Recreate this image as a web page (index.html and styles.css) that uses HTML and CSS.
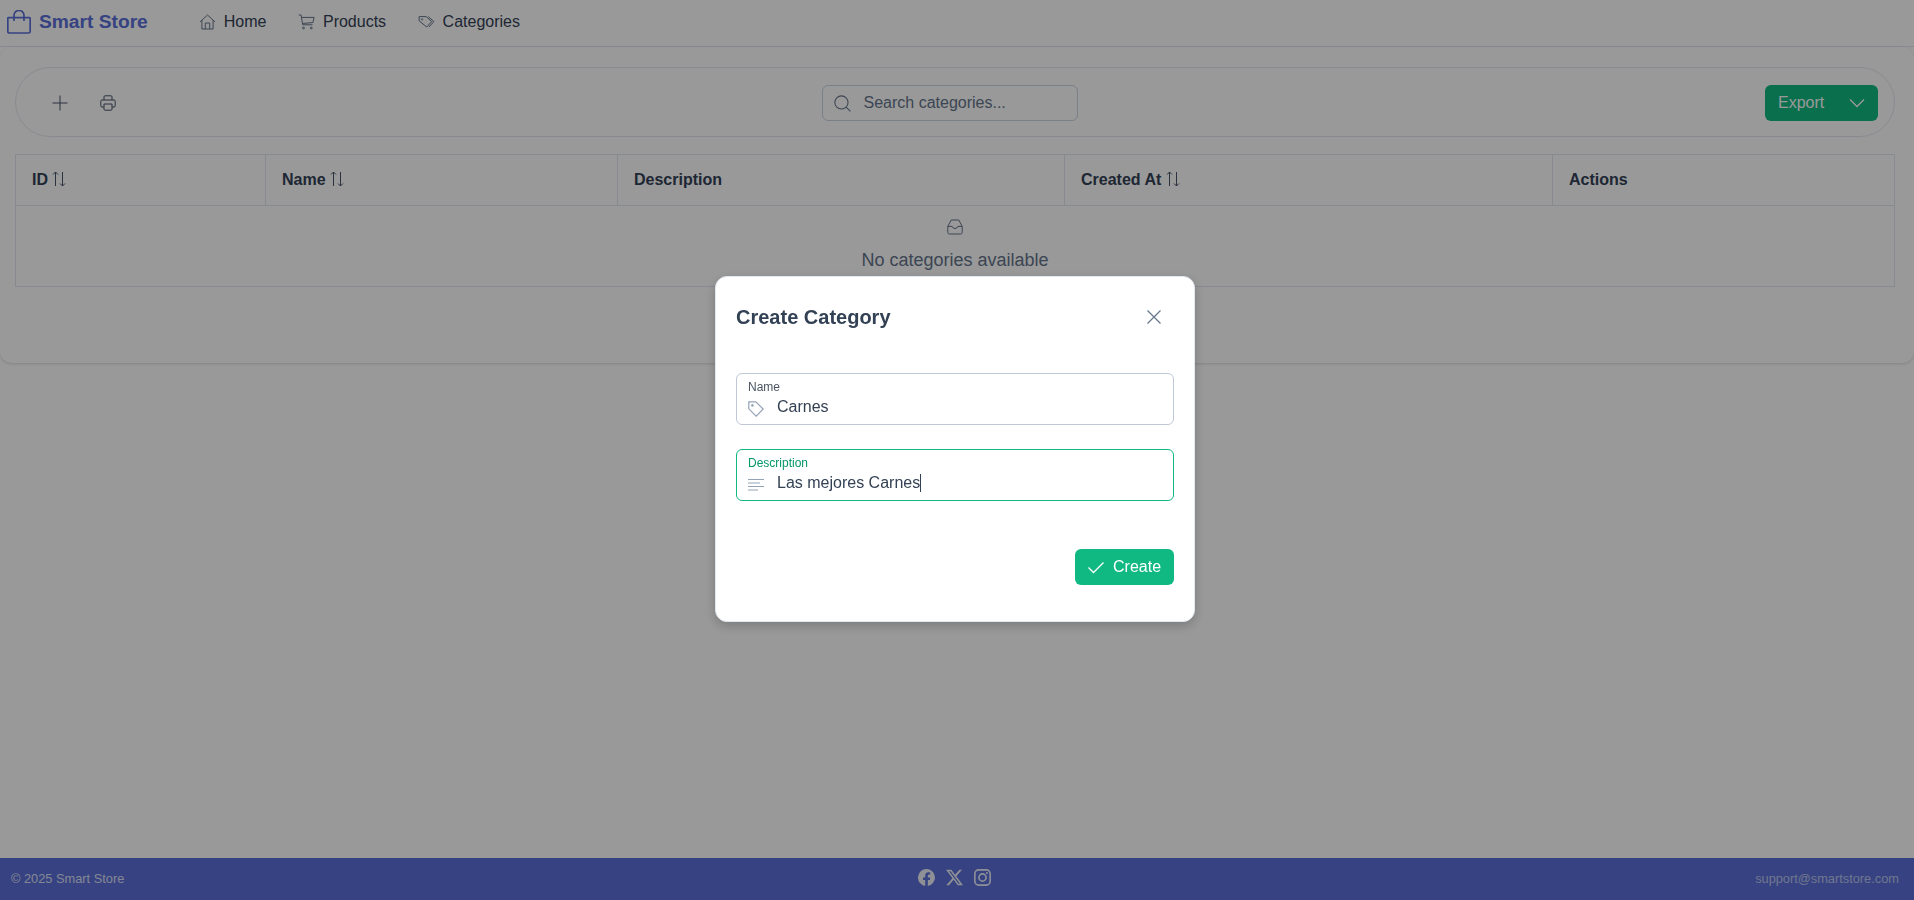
FILE: index.html
```html
<!DOCTYPE html>
<html lang="en">
  <head>
    <meta charset="UTF-8" />
    <meta name="viewport" content="width=device-width, initial-scale=1.0" />
    <title>Smart Store</title>
    <link rel="stylesheet" href="styles.css">
  </head>
  <body>
    <div class="app">
      <!-- Top navigation -->
      <nav class="navbar">
        <a class="brand">
          <svg class="brand-icon" viewBox="0 0 24 24"><path d="M1.6 7.6h20.8a.8.8 0 0 1 .8.8v13a1.6 1.6 0 0 1-1.6 1.6H2.4a1.6 1.6 0 0 1-1.6-1.6v-13a.8.8 0 0 1 .8-.8z"/><path d="M7 11V5.5a5 5 0 0 1 10 0V11"/></svg>
          Smart Store
        </a>
        <ul class="nav-links">
          <li class="nav-item">
            <svg class="nav-icon" viewBox="0 0 16 16"><path d="M.6 7.8 8 1l7.4 6.8M2.4 6.2v8.8h11.2V6.2"/><path d="M5.8 15V9h4.4v6"/></svg>
            Home
          </li>
          <li class="nav-item">
            <svg class="nav-icon" viewBox="0 0 16 16"><path d="M.2 1h2.4l1.6 9.8h9.8M3 3.4h12.6l-1.2 5.2-9.8.8"/><circle cx="5" cy="14" r=".9"/><circle cx="12.8" cy="14" r=".9"/></svg>
            Products
          </li>
          <li class="nav-item">
            <svg class="nav-icon" viewBox="0 0 16 16"><path d="M.6 2.6h7l5.6 5-5 5.4-7.6-6.2z"/><path d="M9.8 2.6l5.6 5-5 5.4"/><circle cx="3.6" cy="5.4" r=".6"/></svg>
            Categories
          </li>
        </ul>
      </nav>

      <main class="card">
        <div class="toolbar">
          <div class="toolbar-start">
            <button class="icon-btn">
              <svg class="icon" viewBox="0 0 16 16"><path d="M8 .5v15M.5 8h15"/></svg>
            </button>
            <button class="icon-btn">
              <svg class="icon" viewBox="0 0 16 16"><path d="M4 5V1.8A1 1 0 0 1 5 .8h6a1 1 0 0 1 1 1V5"/><path d="M4 12H2a1.2 1.2 0 0 1-1.2-1.2V6.2A1.2 1.2 0 0 1 2 5h12a1.2 1.2 0 0 1 1.2 1.2v4.6A1.2 1.2 0 0 1 14 12h-2"/><path d="M4 9h8v5.2a1 1 0 0 1-1 1H5a1 1 0 0 1-1-1z"/></svg>
            </button>
          </div>
          <div class="search">
            <svg class="search-icon" viewBox="0 0 16 16"><circle cx="7" cy="7" r="6.2"/><path d="m11.6 11.6 3.9 3.9"/></svg>
            <span class="search-text">Search categories...</span>
          </div>
          <div class="split-btn">
            <span class="split-label">Export</span>
            <span class="split-arrow">
              <svg class="chevron-icon" viewBox="0 0 16 16"><path d="m1 4.5 7 7 7-7"/></svg>
            </span>
          </div>
        </div>

        <table class="data-table">
          <thead>
            <tr>
              <th class="col-id">ID <svg class="sort-icon" viewBox="0 0 16 16"><path d="M4.5 15V1M2 3.5 4.5 1 7 3.5M11.5 1v14M9 12.5l2.5 2.5 2.5-2.5"/></svg></th>
              <th class="col-name">Name <svg class="sort-icon" viewBox="0 0 16 16"><path d="M4.5 15V1M2 3.5 4.5 1 7 3.5M11.5 1v14M9 12.5l2.5 2.5 2.5-2.5"/></svg></th>
              <th class="col-desc">Description</th>
              <th class="col-created">Created At <svg class="sort-icon" viewBox="0 0 16 16"><path d="M4.5 15V1M2 3.5 4.5 1 7 3.5M11.5 1v14M9 12.5l2.5 2.5 2.5-2.5"/></svg></th>
              <th>Actions</th>
            </tr>
          </thead>
          <tbody>
            <tr>
              <td colspan="5" class="empty">
                <svg class="empty-icon" viewBox="0 0 16 16"><path d="M4.2 1h7.6l3.4 6.4v6a1.6 1.6 0 0 1-1.6 1.6H2.4A1.6 1.6 0 0 1 .8 13.4v-6z"/><path d="M.8 7.4h4.4a2.9 2.9 0 0 0 5.6 0h4.4"/></svg>
                <div class="empty-text">No categories available</div>
              </td>
            </tr>
          </tbody>
        </table>
      </main>

      <footer class="footer">
        <span class="copyright">© 2025 Smart Store</span>
        <div class="socials">
          <svg class="social" viewBox="0 0 16 16"><path class="solid" d="M16 8a8 8 0 1 0-9.25 7.9v-5.59H4.72V8h2.03V6.24c0-2 1.19-3.11 3.02-3.11.87 0 1.79.16 1.79.16v1.97h-1.01c-.99 0-1.3.62-1.3 1.25V8h2.22l-.35 2.31H9.25v5.59A8 8 0 0 0 16 8z"/></svg>
          <svg class="social" viewBox="0 0 16 16"><path class="solid" d="M12.6.75h2.45L9.7 6.87 16 15.25h-4.93L7.2 10.18l-4.42 5.07H.32l5.73-6.55L0 .75h5.06l3.49 4.62zm-.86 13.03h1.36L4.32 2.15H2.87z"/></svg>
          <svg class="social" viewBox="0 0 16 16"><rect class="ring" x=".8" y=".8" width="14.4" height="14.4" rx="3.6"/><circle class="ring" cx="8" cy="8" r="3.4"/><circle class="solid" cx="12.2" cy="3.8" r=".95"/></svg>
        </div>
        <span class="support">support@smartstore.com</span>
      </footer>
    </div>

    <!-- Create dialog -->
    <div class="mask">
      <div class="dialog">
        <div class="dialog-header">
          <span class="dialog-title">Create Category</span>
          <svg class="close-icon" viewBox="0 0 16 16"><path d="m1.5 1.5 13 13M14.5 1.5l-13 13"/></svg>
        </div>
        <div class="dialog-body">
          <div class="field">
            <label class="field-label">Name</label>
            <div class="field-row">
              <svg class="field-icon" viewBox="0 0 16 16"><path d="M.8.8h7l7.4 7.2-7 7.2L.8 7.8z"/><circle cx="4.4" cy="4.4" r=".7"/></svg>
              <span class="field-value">Carnes</span>
            </div>
          </div>
          <div class="field focused">
            <label class="field-label">Description</label>
            <div class="field-row">
              <svg class="field-icon" viewBox="0 0 16 16"><path d="M0 2.5h16M0 6h12M0 9.5h16M0 13h10"/></svg>
              <span class="field-value">Las mejores Carnes</span><span class="caret"></span>
            </div>
          </div>
        </div>
        <div class="dialog-footer">
          <button class="create-btn">
            <svg class="check-icon" viewBox="0 0 16 16"><path d="m.5 8.5 5 5 10-10"/></svg>
            Create
          </button>
        </div>
      </div>
    </div>
  </body>
</html>
```

FILE: styles.css
```css
* {
  box-sizing: border-box;
}
body {
  font-family: "Liberation Sans", Arial, sans-serif;
  font-size: 16px;
  color: #334155;
  margin: 0;
  padding: 0;
  background: #fff;
}
svg {
  fill: none;
  stroke: currentColor;
  stroke-width: 1;
  display: block;
  flex-shrink: 0;
}
button {
  font: inherit;
  border: none;
  background: none;
  padding: 0;
}
.app {
  height: 100vh;
  display: flex;
  flex-direction: column;
}

/* navbar */
.navbar {
  height: 47px;
  display: flex;
  align-items: center;
  padding: 0 0 2px 7px;
  border-bottom: 1px solid #e2e8f0;
  flex-shrink: 0;
}
.brand {
  display: flex;
  align-items: center;
  gap: 8px;
  font-size: 19.2px;
  font-weight: bold;
  color: #5a6fd8;
}
.brand-icon {
  width: 24px;
  height: 24px;
  stroke-width: 1.7;
}
.nav-links {
  list-style: none;
  display: flex;
  gap: 31.5px;
  margin: 0 0 0 51px;
  padding: 0;
}
.nav-item {
  display: flex;
  align-items: center;
  gap: 8px;
  color: #334155;
}
.nav-icon {
  width: 17px;
  height: 16px;
  color: #64748b;
}

/* main card */
.card {
  height: 316px;
  padding: 20px 19px 0 15px;
  border-radius: 12px;
  background: #fff;
  box-shadow: 0 1px 3px rgba(0, 0, 0, 0.15);
}
.toolbar {
  height: 70px;
  display: flex;
  align-items: center;
  justify-content: space-between;
  padding: 2px 16px 0;
  border: 1px solid #e2e8f0;
  border-radius: 36px;
}
.toolbar-start {
  display: flex;
  gap: 8px;
  padding: 0 6px 0 8px;
}
.icon-btn {
  width: 40px;
  height: 36px;
  display: flex;
  align-items: center;
  justify-content: center;
  color: #475569;
}
.icon {
  width: 16px;
  height: 16px;
}
.search {
  width: 256px;
  height: 36px;
  display: flex;
  align-items: center;
  padding: 0 11px;
  gap: 13px;
  border: 1px solid #cbd5e1;
  border-radius: 6px;
}
.search-icon {
  width: 17px;
  height: 17px;
  color: #64748b;
}
.search-text {
  color: #64748b;
}
.split-btn {
  width: 113px;
  height: 36px;
  display: flex;
  align-items: center;
  background: #10b981;
  border-radius: 6px;
  color: #fff;
}
.split-label {
  width: 71px;
  padding-left: 13px;
}
.split-arrow {
  flex: 1;
  display: flex;
  justify-content: center;
}
.chevron-icon {
  width: 16px;
  height: 16px;
  stroke-width: 1.3;
}

/* table */
.data-table {
  width: 1880px;
  margin-top: 17px;
  border-collapse: collapse;
  table-layout: fixed;
}
.data-table th,
.data-table td {
  border: 1px solid #e2e8f0;
}
.data-table th {
  height: 51px;
  padding: 0 16px;
  text-align: left;
  font-weight: bold;
  color: #334155;
  white-space: nowrap;
}
.col-id { width: 250px; }
.col-name { width: 352px; }
.col-desc { width: 447px; }
.col-created { width: 488px; }
.sort-icon {
  display: inline-block;
  width: 16px;
  height: 16px;
  margin-left: -1px;
  vertical-align: top;
  color: #475569;
}
.data-table td.empty {
  height: 81px;
  padding: 13px 0 0;
  vertical-align: top;
  text-align: center;
}
.empty-icon {
  width: 16px;
  height: 16px;
  margin: 0 auto;
  color: #64748b;
}
.empty-text {
  margin-top: 15px;
  font-size: 18px;
  color: #64748b;
}

/* footer */
.footer {
  height: 42px;
  margin-top: auto;
  display: flex;
  align-items: center;
  justify-content: space-between;
  padding: 0 15px 2px 11px;
  background: #5a6fd8;
  font-size: 12.8px;
}
.copyright {
  color: rgba(255, 255, 255, 0.8);
}
.support {
  color: rgba(255, 255, 255, 0.6);
}
.socials {
  display: flex;
  gap: 11px;
  margin-left: 30px;
  margin-top: -2px;
}
.social {
  width: 17px;
  height: 17px;
  color: rgba(255, 255, 255, 0.9);
}
.social .solid {
  fill: currentColor;
  stroke: none;
}
.social .ring {
  stroke-width: 1.5;
}

/* dialog */
.mask {
  position: fixed;
  inset: 0;
  padding: 0 4px 2px 0;
  display: flex;
  align-items: center;
  justify-content: center;
  background: rgba(0, 0, 0, 0.4);
}
.dialog {
  width: 480px;
  height: 346px;
  padding: 20px;
  display: flex;
  flex-direction: column;
  background: #fff;
  border: 1px solid #e2e8f0;
  border-radius: 12px;
  box-shadow: 0 4px 12px rgba(0, 0, 0, 0.2);
}
.dialog-header {
  height: 40px;
  display: flex;
  align-items: center;
  justify-content: space-between;
  padding-right: 12px;
}
.dialog-title {
  font-size: 20px;
  font-weight: bold;
  color: #334155;
}
.close-icon {
  width: 16px;
  height: 16px;
  color: #64748b;
  stroke-width: 1.2;
}
.dialog-body {
  margin-top: 36px;
  display: flex;
  flex-direction: column;
  gap: 24px;
}
.field {
  height: 52px;
  padding: 6px 11px 0;
  border: 1px solid #bfc9d6;
  border-radius: 6px;
}
.field-label {
  display: block;
  font-size: 12px;
  line-height: 14px;
  color: #4b5563;
}
.field.focused {
  border-color: #10b981;
}
.field.focused .field-label {
  color: #059669;
}
.field-row {
  display: flex;
  align-items: center;
  margin-top: 2px;
  height: 22px;
}
.field-icon {
  width: 16px;
  height: 16px;
  margin-top: 4px;
  margin-right: 13px;
  color: #94a3b8;
  stroke-width: 1.2;
}
.field-value {
  color: #334155;
}
.caret {
  width: 1px;
  height: 18px;
  background: #334155;
}
.dialog-footer {
  margin-top: 48px;
  display: flex;
  justify-content: flex-end;
}
.create-btn {
  width: 99px;
  height: 36px;
  display: flex;
  align-items: center;
  gap: 9px;
  padding-left: 13px;
  background: #10b981;
  border-radius: 6px;
  color: #fff;
}
.check-icon {
  width: 16px;
  height: 16px;
  stroke-width: 1.3;
}
```
